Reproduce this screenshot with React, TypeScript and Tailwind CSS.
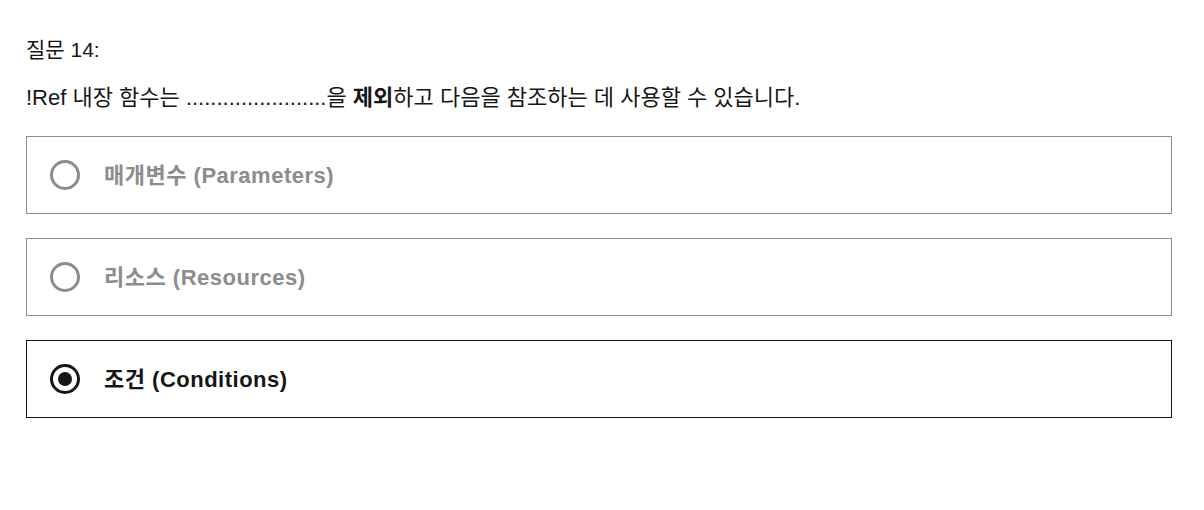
import { useState } from 'react'

const options = [
  { id: 'a', label: '매개변수 (Parameters)' },
  { id: 'b', label: '리소스 (Resources)' },
  { id: 'c', label: '조건 (Conditions)' },
]

const font = { fontFamily: '"Liberation Sans", "Noto Sans CJK KR", sans-serif' }

export default function App() {
  const [selected, setSelected] = useState('c')

  return (
    <div className="w-[1204px] h-[510px] bg-white text-[#161616] px-[26px] pt-[36px]" style={font}>
      <p className="text-[21px] leading-[28px]">질문 14:</p>
      <p className="mt-[20px] text-[22px] leading-[28px]">
        !Ref 내장 함수는 .......................을 <b>제외</b>하고 다음을 참조하는 데 사용할 수 있습니다.
      </p>

      <div className="mt-[24px] w-[1146px] flex flex-col gap-[24px]">
        {options.map((opt) => {
          const isActive = opt.id === selected
          return (
            <button
              key={opt.id}
              onClick={() => setSelected(opt.id)}
              className={`h-[78px] flex items-center gap-[24px] pl-[23px] text-left border ${isActive ? 'border-[#161616]' : 'border-[#8c8c8c]'}`}
            >
              {/* radio */}
              <span
                className={`w-[30px] h-[30px] rounded-full border-[3px] flex items-center justify-center ${isActive ? 'border-[#161616]' : 'border-[#8c8c8c]'}`}
              >
                {isActive && <span className="w-[14px] h-[14px] rounded-full bg-[#161616]" />}
              </span>
              <span className={`text-[22px] font-bold tracking-[0.5px] ${isActive ? 'text-[#161616]' : 'text-[#8c8c8c]'}`}>
                {opt.label}
              </span>
            </button>
          )
        })}
      </div>
    </div>
  )
}
